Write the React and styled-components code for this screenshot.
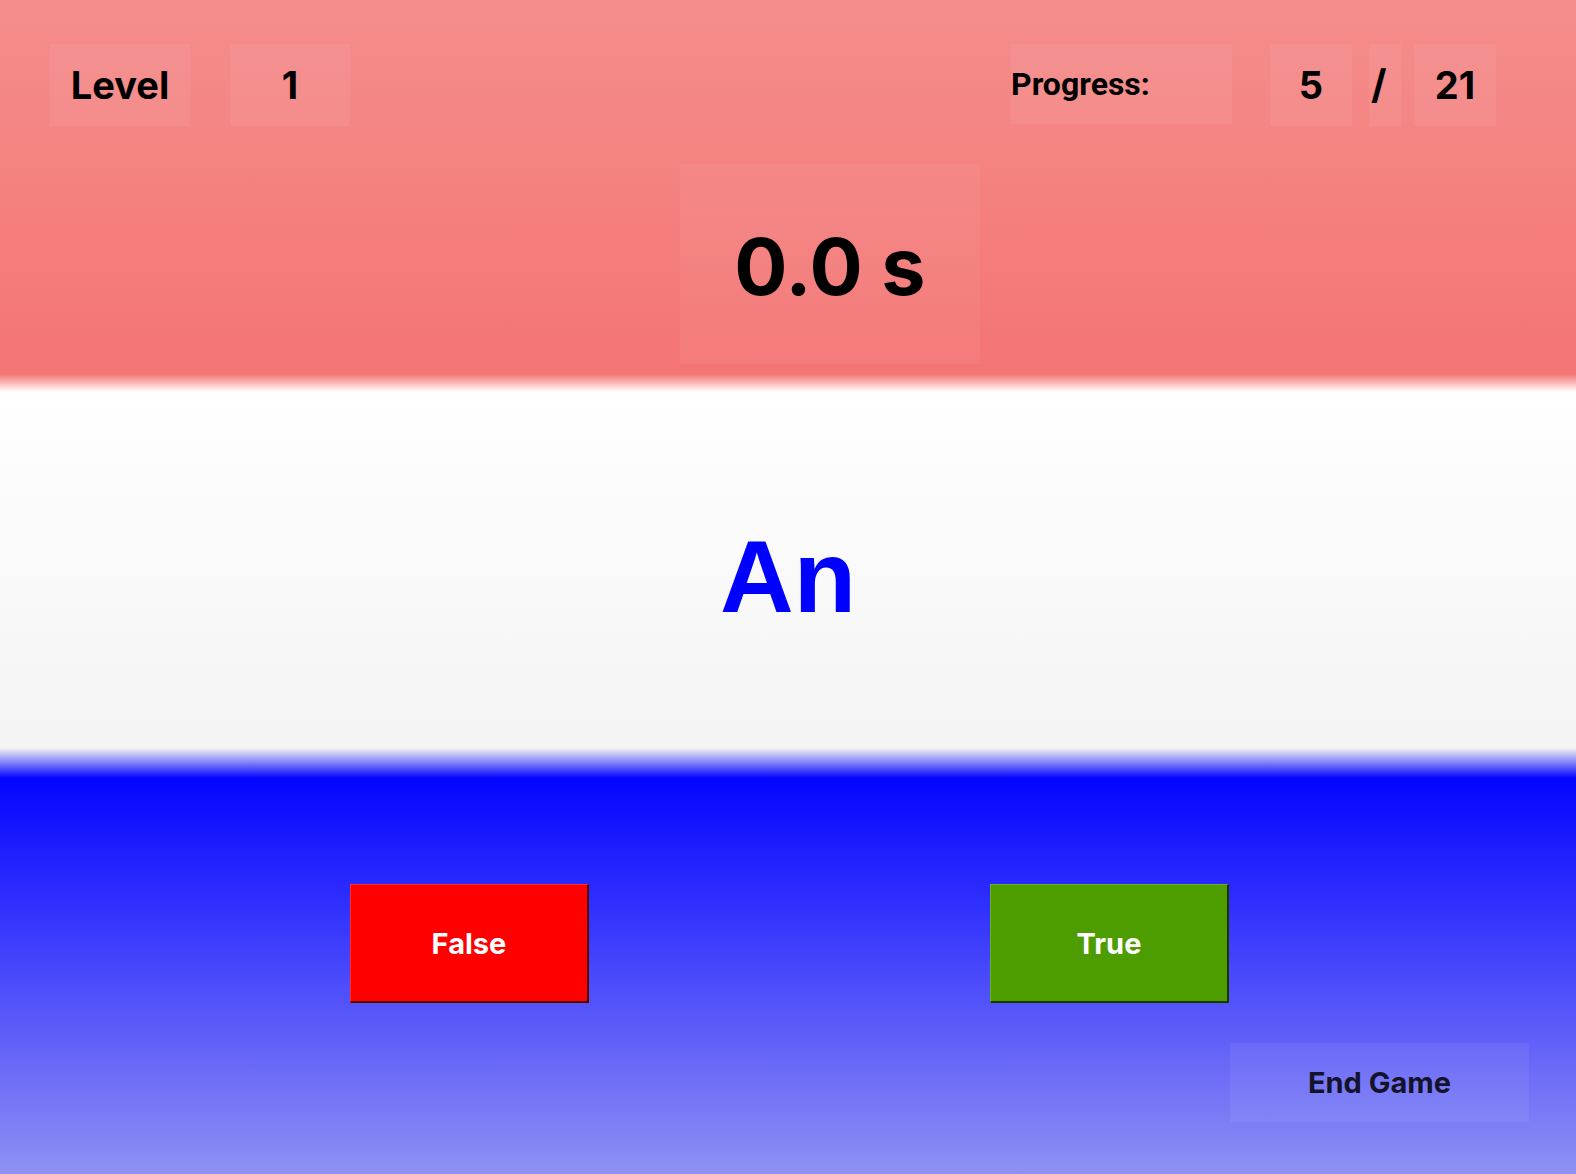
import React from "react";
import styled, { createGlobalStyle } from "styled-components";

const GlobalStyle = createGlobalStyle`
  html, body { margin: 0; padding: 0; height: 100%; }
  body { font-family: Inter, "Noto Sans", sans-serif; }
  #root { height: 100%; }
`;

const Page = styled.div`
  height: 100vh;
  display: flex;
  flex-direction: column;
  overflow: hidden;
`;

const TopBand = styled.section`
  height: 392px;
  flex: none;
  box-sizing: border-box;
  padding-top: 44px;
  display: flex;
  flex-direction: column;
  align-items: center;
  background: linear-gradient(
    to bottom,
    #f48e8c 0px,
    #f47474 374px,
    #ffffff 392px
  );
`;

const MiddleBand = styled.section`
  height: 356px;
  flex: none;
  display: flex;
  align-items: center;
  justify-content: center;
  background: linear-gradient(to bottom, #ffffff, #f4f4f4);
`;

const BottomBand = styled.section`
  flex: 1;
  box-sizing: border-box;
  padding-top: 136px;
  display: flex;
  flex-direction: column;
  background: linear-gradient(
    to bottom,
    #f4f4f4 0px,
    #0505ff 30px,
    #2a2aff 140px,
    #9090f4 100%
  );
`;

const Header = styled.header`
  align-self: stretch;
  display: flex;
  justify-content: space-between;
  align-items: flex-start;
  padding: 0 80px 0 50px;
`;

const Group = styled.div`
  display: flex;
  align-items: flex-start;
  gap: ${(p) => p.$gap}px;
`;

const Tile = styled.div`
  box-sizing: border-box;
  width: ${(p) => p.$w}px;
  height: ${(p) => p.$h || 82}px;
  margin-left: ${(p) => p.$ml || 0}px;
  padding-left: ${(p) => p.$pl || 0}px;
  background: rgba(255, 255, 255, 0.06);
  display: flex;
  align-items: center;
  justify-content: ${(p) => (p.$left ? "flex-start" : "center")};
  font-family: ${(p) => (p.$roboto ? "Roboto, Inter, sans-serif" : "Inter, sans-serif")};
  font-weight: 700;
  font-size: ${(p) => p.$size || 38}px;
  color: #000;
  line-height: 1;
`;

const TimerBox = styled.div`
  margin-top: 38px;
  margin-left: 84px;
  width: 300px;
  height: 200px;
  background: rgba(255, 255, 255, 0.05);
  display: flex;
  align-items: center;
  justify-content: center;
  font-family: Inter, sans-serif;
  font-weight: 700;
  font-size: 79px;
  color: #000;
  padding-top: 4px;
  box-sizing: border-box;
`;

const Word = styled.div`
  font-family: "Liberation Sans", Arial, sans-serif;
  font-weight: 700;
  font-size: 102px;
  color: #0000ff;
  line-height: 1;
  margin-top: 14px;
`;

const AnswerRow = styled.div`
  display: flex;
  justify-content: center;
  gap: 401px;
  padding-left: 3px;
`;

const AnswerButton = styled.button`
  width: 239px;
  height: 119px;
  box-sizing: border-box;
  background: ${(p) => p.$bg};
  border-top: 1px solid rgba(255, 255, 255, 0.18);
  border-left: 1px solid rgba(255, 255, 255, 0.18);
  border-right: 2px solid rgba(0, 0, 0, 0.65);
  border-bottom: 2px solid rgba(0, 0, 0, 0.65);
  color: #fff;
  font-family: Inter, sans-serif;
  font-weight: 700;
  font-size: 29px;
  padding: 0;
  cursor: pointer;
`;

const Footer = styled.div`
  display: flex;
  justify-content: flex-end;
  padding-right: 47px;
  margin-top: 40px;
`;

const EndButton = styled.button`
  width: 299px;
  height: 79px;
  background: rgba(255, 255, 255, 0.06);
  border: none;
  color: #13132a;
  font-family: Inter, sans-serif;
  font-weight: 700;
  font-size: 29px;
  padding: 0;
  cursor: pointer;
`;

export default function App() {
  return (
    <Page>
      <GlobalStyle />
      <TopBand>
        <Header>
          <Group $gap={40}>
            <Tile $w={140}>Level</Tile>
            <Tile $w={120}>1</Tile>
          </Group>
          <Group $gap={0}>
            <Tile $w={221} $h={80} $left $roboto $size={32}>
              Progress:
            </Tile>
            <Tile $w={82} $ml={38}>5</Tile>
            <Tile $w={32} $ml={17} $left $pl={2} $size={40}>/</Tile>
            <Tile $w={82} $ml={13}>21</Tile>
          </Group>
        </Header>
        <TimerBox>0.0 s</TimerBox>
      </TopBand>
      <MiddleBand>
        <Word>An</Word>
      </MiddleBand>
      <BottomBand>
        <AnswerRow>
          <AnswerButton $bg="#ff0000">False</AnswerButton>
          <AnswerButton $bg="#4d9d00">True</AnswerButton>
        </AnswerRow>
        <Footer>
          <EndButton>End Game</EndButton>
        </Footer>
      </BottomBand>
    </Page>
  );
}
